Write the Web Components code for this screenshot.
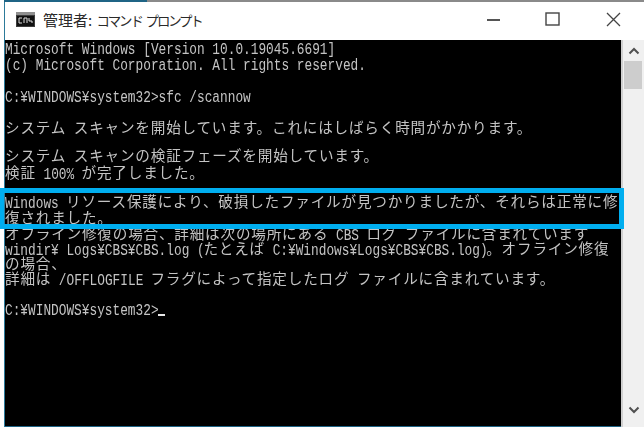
<!DOCTYPE html>
<html><head><meta charset="utf-8"><style>
html,body{margin:0;padding:0;background:#fff}
body{width:644px;height:427px;overflow:hidden}
</style></head><body>
<cmd-window>
<con-line h="15.5">Microsoft Windows [Version 10.0.19045.6691]</con-line>
<con-line h="16">(c) Microsoft Corporation. All rights reserved.</con-line>
<con-line h="16"></con-line>
<con-line h="16">C:¥WINDOWS¥system32>sfc /scannow</con-line>
<con-line h="16"></con-line>
<con-line h="16">システム スキャンを開始しています。これにはしばらく時間がかかります。</con-line>
<con-line h="12"></con-line>
<con-line h="16">システム スキャンの検証フェーズを開始しています。</con-line>
<con-line h="17">検証 100% が完了しました。</con-line>
<con-line h="13"></con-line>
<con-line h="16">Windows リソース保護により、破損したファイルが見つかりましたが、それらは正常に修</con-line>
<con-line h="16">復されました。</con-line>
<con-line h="15">オフライン修復の場合、詳細は次の場所にある CBS ログ ファイルに含まれています</con-line>
<con-line h="15">windir¥ Logs¥CBS¥CBS.log (たとえば C:¥Windows¥Logs¥CBS¥CBS.log)。オフライン修復</con-line>
<con-line h="15">の場合、</con-line>
<con-line h="13">詳細は /OFFLOGFILE フラグによって指定したログ ファイルに含まれています。</con-line>
<con-line h="17"></con-line>
<con-line h="16">C:¥WINDOWS¥system32><i-cursor></i-cursor></con-line>
</cmd-window>
<script>
class ConLine extends HTMLElement{
  constructor(){super();this.attachShadow({mode:'open'});}
  connectedCallback(){
    const h=this.getAttribute('h')||16;
    const st=document.createElement('style');
    st.textContent=`:host{display:block;height:${h}px;line-height:${h}px;white-space:pre;color:#c4c4c4}
    .a{font:12.8px/1 "Liberation Mono",monospace;display:inline-block;transform:scaleY(1.22);width:var(--w)}
    .j{font:14.6px/1 "Noto Sans CJK JP",sans-serif;letter-spacing:.8px}`;
    this.shadowRoot.append(st);
    const frag=document.createDocumentFragment();
    for(const n of [...this.childNodes]){
      if(n.nodeType!==3){frag.append(n);continue;}
      for(const m of n.textContent.matchAll(/[\x00-\x7f¥]+|[^\x00-\x7f¥]+/g)){
        const s=document.createElement('span');
        const ascii=/^[\x00-\x7f¥]/.test(m[0]);
        s.className=ascii?'a':'j';
        if(ascii)s.style.setProperty('--w',(m[0].length*7.63)+'px');
        s.textContent=m[0];frag.append(s);
      }
    }
    this.shadowRoot.append(frag);
  }
}
customElements.define('con-line',ConLine);
class ICursor extends HTMLElement{
  constructor(){super();this.attachShadow({mode:'open'}).innerHTML=`<style>:host{display:inline-block;width:7.6px;height:2px;background:#e8e8e8;vertical-align:-2px}</style>`;}
}
customElements.define('i-cursor',ICursor);
class ScrollBar extends HTMLElement{
  constructor(){super();this.attachShadow({mode:'open'}).innerHTML=`<style>
  :host{display:flex;flex-direction:column;width:23px;background:#f0f0f0;border-left:2px solid #d0d0d0;box-sizing:border-box}
  .btn{height:21px;display:flex;align-items:center;justify-content:center;flex:none}
  .btn.d{height:24px;align-items:flex-start;padding-top:3px;box-sizing:border-box}
  .thumb{height:28px;margin-left:1px;width:18px;background:#cdcdcd;flex:none}
  .sp{flex:1}
  svg{display:block}
  </style>
  <div class="btn"><svg width="12" height="8" viewBox="0 0 12 8"><path d="M1.5 6.5 6 2l4.5 4.5" fill="none" stroke="#505050" stroke-width="2"/></svg></div>
  <div class="thumb"></div><div class="sp"></div>
  <div class="btn d"><svg width="12" height="8" viewBox="0 0 12 8"><path d="M1.5 1.5 6 6l4.5-4.5" fill="none" stroke="#505050" stroke-width="2"/></svg></div>`;}
}
customElements.define('scroll-bar',ScrollBar);
class CmdWindow extends HTMLElement{
  constructor(){super();this.attachShadow({mode:'open'}).innerHTML=`<style>
  :host{display:flex;flex-direction:column;width:644px;height:427px;box-sizing:border-box;position:relative;background:#fff;overflow:hidden}
  .top{height:2px;flex:none;background:linear-gradient(90deg,#fff 0 4px,#1f6485 4px 147px,#8a8a8a 147px)}
  .wrap{display:flex;flex-direction:column;flex:1;min-height:0;margin-left:4px;border-left:1px solid #2c7a9a}
  .title{height:38px;flex:none;display:flex;align-items:center;padding:0 0 3px 11px;box-sizing:border-box;background:#fff;color:#2a2a2a;font:15px "Noto Sans CJK JP",sans-serif}
  .title svg{flex:none}
  .title .ic{margin-right:8px}
  .kana{font-size:13.4px;font-feature-settings:"pwid";letter-spacing:-2.1px;word-spacing:3px;margin-left:1px}
  .ctl{margin-left:auto;display:flex;align-items:center}
  .ctl div{width:59px;display:flex;justify-content:center}
  .ctl div.x{width:62px}
  .body{flex:1;display:flex;min-height:0}
  .con{flex:1;background:#000;overflow:hidden;filter:blur(.4px);border-bottom:1px solid #1f6485}
  .hl{position:absolute;left:-1px;top:188px;width:625px;height:41px;box-sizing:border-box;border:5px solid #00aeef}
  </style>
  <div class="top"></div>
  <div class="wrap">
  <div class="title">
    <svg class="ic" width="19" height="15" viewBox="0 0 19 15"><rect width="19" height="15" fill="#3c3c3c"/><rect x="0" y="0" width="19" height="3" fill="#8f8f8f"/><rect x="1" y="4" width="17" height="10" fill="#111"/><path d="M3 6H6M3 6V11H6M8 11V6H11V11M13 6V9H16V11" fill="none" stroke="#ddd" stroke-width="1"/></svg>
    <span>管理者: <span class="kana">コマンド プロンプト</span></span>
    <span class="ctl">
      <div><svg width="14" height="4" viewBox="0 0 14 4"><rect y="1" width="13" height="2" fill="#555"/></svg></div>
      <div><svg width="15" height="15" viewBox="0 0 15 15"><rect x="1" y="1" width="13" height="12" fill="none" stroke="#444" stroke-width="1.4"/></svg></div>
      <div class="x"><svg width="15" height="15" viewBox="0 0 15 15"><path d="M1 1l13 13M14 1L1 14" stroke="#444" stroke-width="1.3"/></svg></div>
    </span>
  </div>
  <div class="body"><div class="con"><slot></slot></div><scroll-bar></scroll-bar></div>
  </div>
  <div class="hl"></div>`;}
}
customElements.define('cmd-window',CmdWindow);
</script>
</body></html>
